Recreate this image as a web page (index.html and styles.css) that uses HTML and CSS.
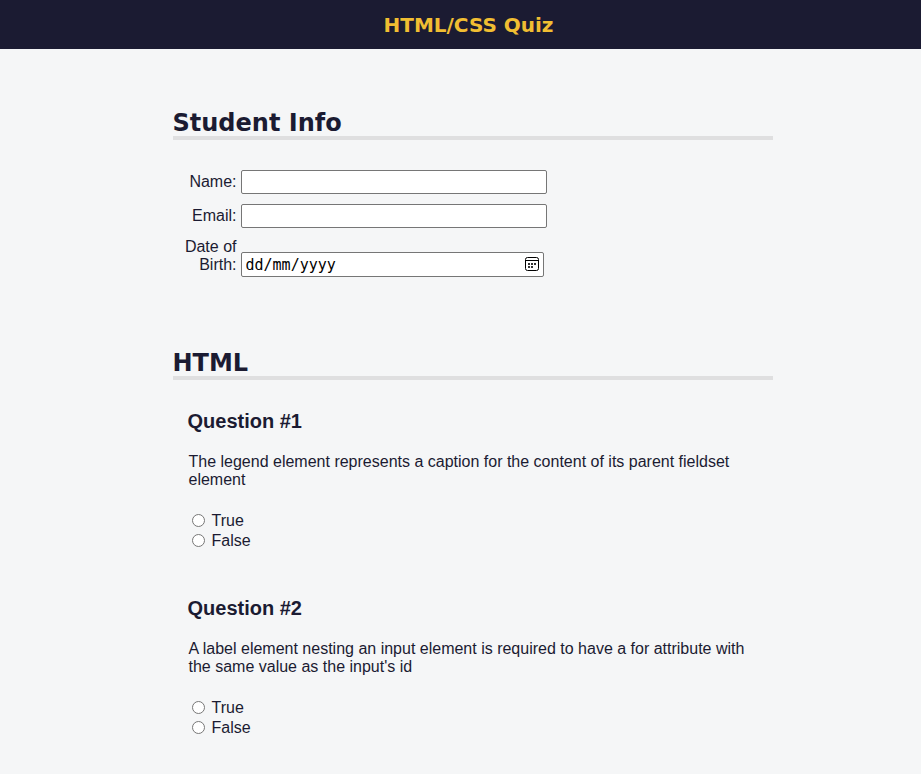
FILE: index.html
```html
<!DOCTYPE html>
<html lang="en">
<head>
<meta charset="utf-8">
<title>HTML/CSS Quiz</title>
<link rel="stylesheet" href="styles.css">
</head>
<body>
<header class="site-header"><h1>HTML/CSS Quiz</h1></header>
<main>
<form>
<section class="student-info">
<h2>Student Info</h2>
<div class="info">
<label for="name">Name:</label>
<input type="text" id="name">
</div>
<div class="info">
<label for="email">Email:</label>
<input type="email" id="email">
</div>
<div class="info">
<label for="dob">Date of Birth:</label>
<span class="date-field">
<input type="text" id="dob" placeholder="dd/mm/yyyy">
<svg width="14" height="14" viewBox="0 0 14 14" aria-hidden="true">
<rect x="0.5" y="0.5" width="13" height="13" rx="2" fill="none" stroke="#000"/>
<path d="M1 3.5h12" stroke="#000"/>
<path d="M3 7h2M6 7h2M9 7h2M3 10h2M6 10h2" stroke="#000" stroke-opacity="0.8" stroke-width="2"/>
</svg>
</span>
</div>
</section>
<section>
<h2>HTML</h2>
<div class="question">
<h3>Question #1</h3>
<fieldset>
<legend>The legend element represents a caption for the content of its parent fieldset element</legend>
<label><input type="radio" name="q1"> True</label>
<label><input type="radio" name="q1"> False</label>
</fieldset>
</div>
<div class="question">
<h3>Question #2</h3>
<fieldset>
<legend>A label element nesting an input element is required to have a for attribute with the same value as the input's id</legend>
<label><input type="radio" name="q2"> True</label>
<label><input type="radio" name="q2"> False</label>
</fieldset>
</div>
</section>
</form>
</main>
</body>
</html>
```

FILE: styles.css
```css
* { box-sizing: border-box; }
body {
  margin: 0;
  background: #f5f6f7;
  color: #1b1b32;
  font: 16px/18px "Liberation Sans", Arial, sans-serif;
}
.site-header {
  background: #1b1b32;
  padding: 13px 0 12px 16px;
  text-align: center;
}
h1, h2 { margin: 0; font-family: "DejaVu Sans", Verdana, sans-serif; font-weight: bold; }
h1 { color: #f1be32; font-size: 20px; line-height: 24px; }
main { max-width: 624px; margin: 0 auto; padding-left: 24px; }
section { padding-top: 62px; }
h2 { font-size: 24px; line-height: 25px; border-bottom: 4px solid #dfdfe0; }
.info {
  display: grid;
  grid-template-columns: 64px 306px;
  column-gap: 4px;
  align-items: end;
  margin-bottom: 10px;
}
.info label { text-align: right; padding-bottom: 3px; }
.info input {
  width: 100%;
  height: 24px;
  padding: 1px 4px;
  border: 1px solid #767676;
  border-radius: 2px;
  background: #fff;
  font: 16px "Liberation Sans", Arial, sans-serif;
}
.student-info { padding-bottom: 2px; }
.student-info h2 { margin-bottom: 30px; }
.date-field { position: relative; width: 303px; }
.date-field input { display: block; height: 25px; font-family: "DejaVu Sans Mono", monospace; font-size: 15px; }
.date-field input::placeholder { color: #000; opacity: 1; }
.date-field svg { position: absolute; right: 5px; top: 5px; }
.question { padding: 29px 15px 0; }
.question + .question { padding-top: 45px; }
h3 { margin: 0; font-size: 20px; line-height: 24px; }
fieldset { border: 0; margin: 20px 0 0; padding: 0 1px; }
legend { padding: 0; margin-bottom: 22px; }
fieldset label { display: flex; align-items: center; line-height: 20px; }
fieldset input { width: 13px; height: 13px; margin: 0 7px 1px 3px; }
```
